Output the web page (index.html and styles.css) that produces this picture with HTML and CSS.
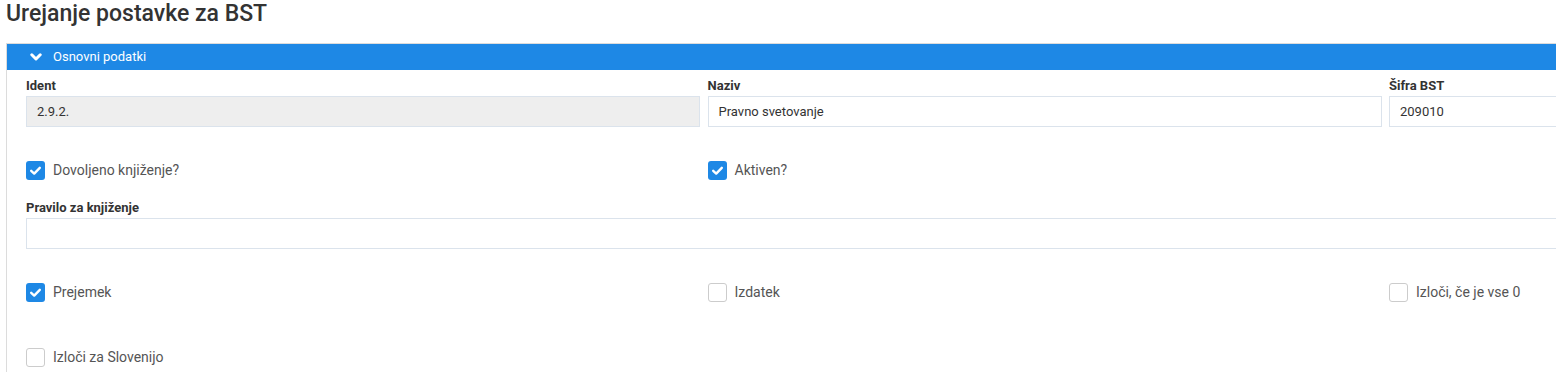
FILE: index.html
```html
<!DOCTYPE html>
<html lang="sl">
<head>
  <meta charset="UTF-8">
  <meta name="viewport" content="width=device-width, initial-scale=1.0">
  <title>Urejanje postavke za BST</title>
  <link rel="stylesheet" href="styles.css">
</head>
<body>
  <h1 class="page-title">Urejanje postavke za BST</h1>

  <div class="panel">
    <div class="panel-header">
      <svg class="chevron" width="12" height="9" viewBox="0 0 12 9">
        <polyline points="1.8,1.8 6,6 10.2,1.8" fill="none" stroke="#fff" stroke-width="3" stroke-linecap="round" stroke-linejoin="round"/>
      </svg>
      <span>Osnovni podatki</span>
    </div>

    <div class="panel-body">
      <div class="row">
        <div class="field">
          <label>Ident</label>
          <div class="input disabled">2.9.2.</div>
        </div>
        <div class="field">
          <label>Naziv</label>
          <div class="input">Pravno svetovanje</div>
        </div>
        <div class="field">
          <label>Šifra BST</label>
          <div class="input">209010</div>
        </div>
      </div>

      <div class="row checks first">
        <div class="check">
          <span class="box checked">
            <svg width="19" height="19" viewBox="0 0 19 19"><polyline points="5.2,9.8 8.2,12.6 13.8,6.8" fill="none" stroke="#fff" stroke-width="2.4" stroke-linecap="round" stroke-linejoin="round"/></svg>
          </span>
          <span class="check-text">Dovoljeno knjiženje?</span>
        </div>
        <div class="check">
          <span class="box checked">
            <svg width="19" height="19" viewBox="0 0 19 19"><polyline points="5.2,9.8 8.2,12.6 13.8,6.8" fill="none" stroke="#fff" stroke-width="2.4" stroke-linecap="round" stroke-linejoin="round"/></svg>
          </span>
          <span class="check-text">Aktiven?</span>
        </div>
        <div></div>
      </div>

      <div class="field full">
        <label>Pravilo za knjiženje</label>
        <div class="input"></div>
      </div>

      <div class="row checks">
        <div class="check">
          <span class="box checked">
            <svg width="19" height="19" viewBox="0 0 19 19"><polyline points="5.2,9.8 8.2,12.6 13.8,6.8" fill="none" stroke="#fff" stroke-width="2.4" stroke-linecap="round" stroke-linejoin="round"/></svg>
          </span>
          <span class="check-text">Prejemek</span>
        </div>
        <div class="check">
          <span class="box"></span>
          <span class="check-text">Izdatek</span>
        </div>
        <div class="check">
          <span class="box"></span>
          <span class="check-text">Izloči, če je vse 0</span>
        </div>
      </div>

      <div class="row checks last">
        <div class="check">
          <span class="box"></span>
          <span class="check-text">Izloči za Slovenijo</span>
        </div>
      </div>
    </div>
  </div>
</body>
</html>
```

FILE: styles.css
```css
body {
  font-family: Roboto, "Liberation Sans", Arial, sans-serif;
  color: #333;
  background-color: #fff;
  margin: 0;
  padding: 0 0 0 6px;
  overflow: hidden;
}
.page-title {
  font-size: 23px;
  font-weight: 500;
  line-height: 28px;
  margin: 0 0 15px 0;
  color: #333;
}
.panel {
  width: 2100px;
  border-top: 1px solid #dcdcdc;
  border-left: 1px solid #dcdcdc;
}
.panel-header {
  height: 26px;
  background-color: #1e88e5; /* blue bar */
  color: #fff;
  font-size: 13px;
  line-height: 26px;
  padding-left: 23px;
  display: flex;
  align-items: center;
}
.chevron {
  margin-right: 11px;
}
.panel-body {
  padding: 8px 0 20px 19px;
}
.row {
  display: grid;
  grid-template-columns: 674px 674px 674px;
  column-gap: 7.5px;
}
.field label {
  display: block;
  font-size: 13px;
  font-weight: 700;
  line-height: 16px;
  margin-bottom: 2px;
  color: #333;
}
.input {
  box-sizing: border-box;
  height: 31px;
  border: 1px solid #dbe3ec;
  padding: 0 10px;
  font-size: 13px;
  line-height: 29px;
  color: #333;
  background-color: #fff;
}
.input.disabled {
  background-color: #eee;
}
.field.full {
  margin-top: 20px;
  width: 2037px;
}
.checks {
  margin-top: 33px;
}
.checks.last {
  margin-top: 45px;
}
.check {
  display: flex;
  align-items: center;
  height: 20px;
}
.box {
  box-sizing: border-box;
  width: 19px;
  height: 19px;
  border: 1px solid #ccc;
  border-radius: 3px;
  background-color: #fff;
  margin-right: 8px;
  flex-shrink: 0;
}
.box.checked {
  border: none;
  background-color: #1e88e5;
}
.box svg {
  display: block;
}
.check-text {
  font-size: 14px;
  color: #555;
}
```
